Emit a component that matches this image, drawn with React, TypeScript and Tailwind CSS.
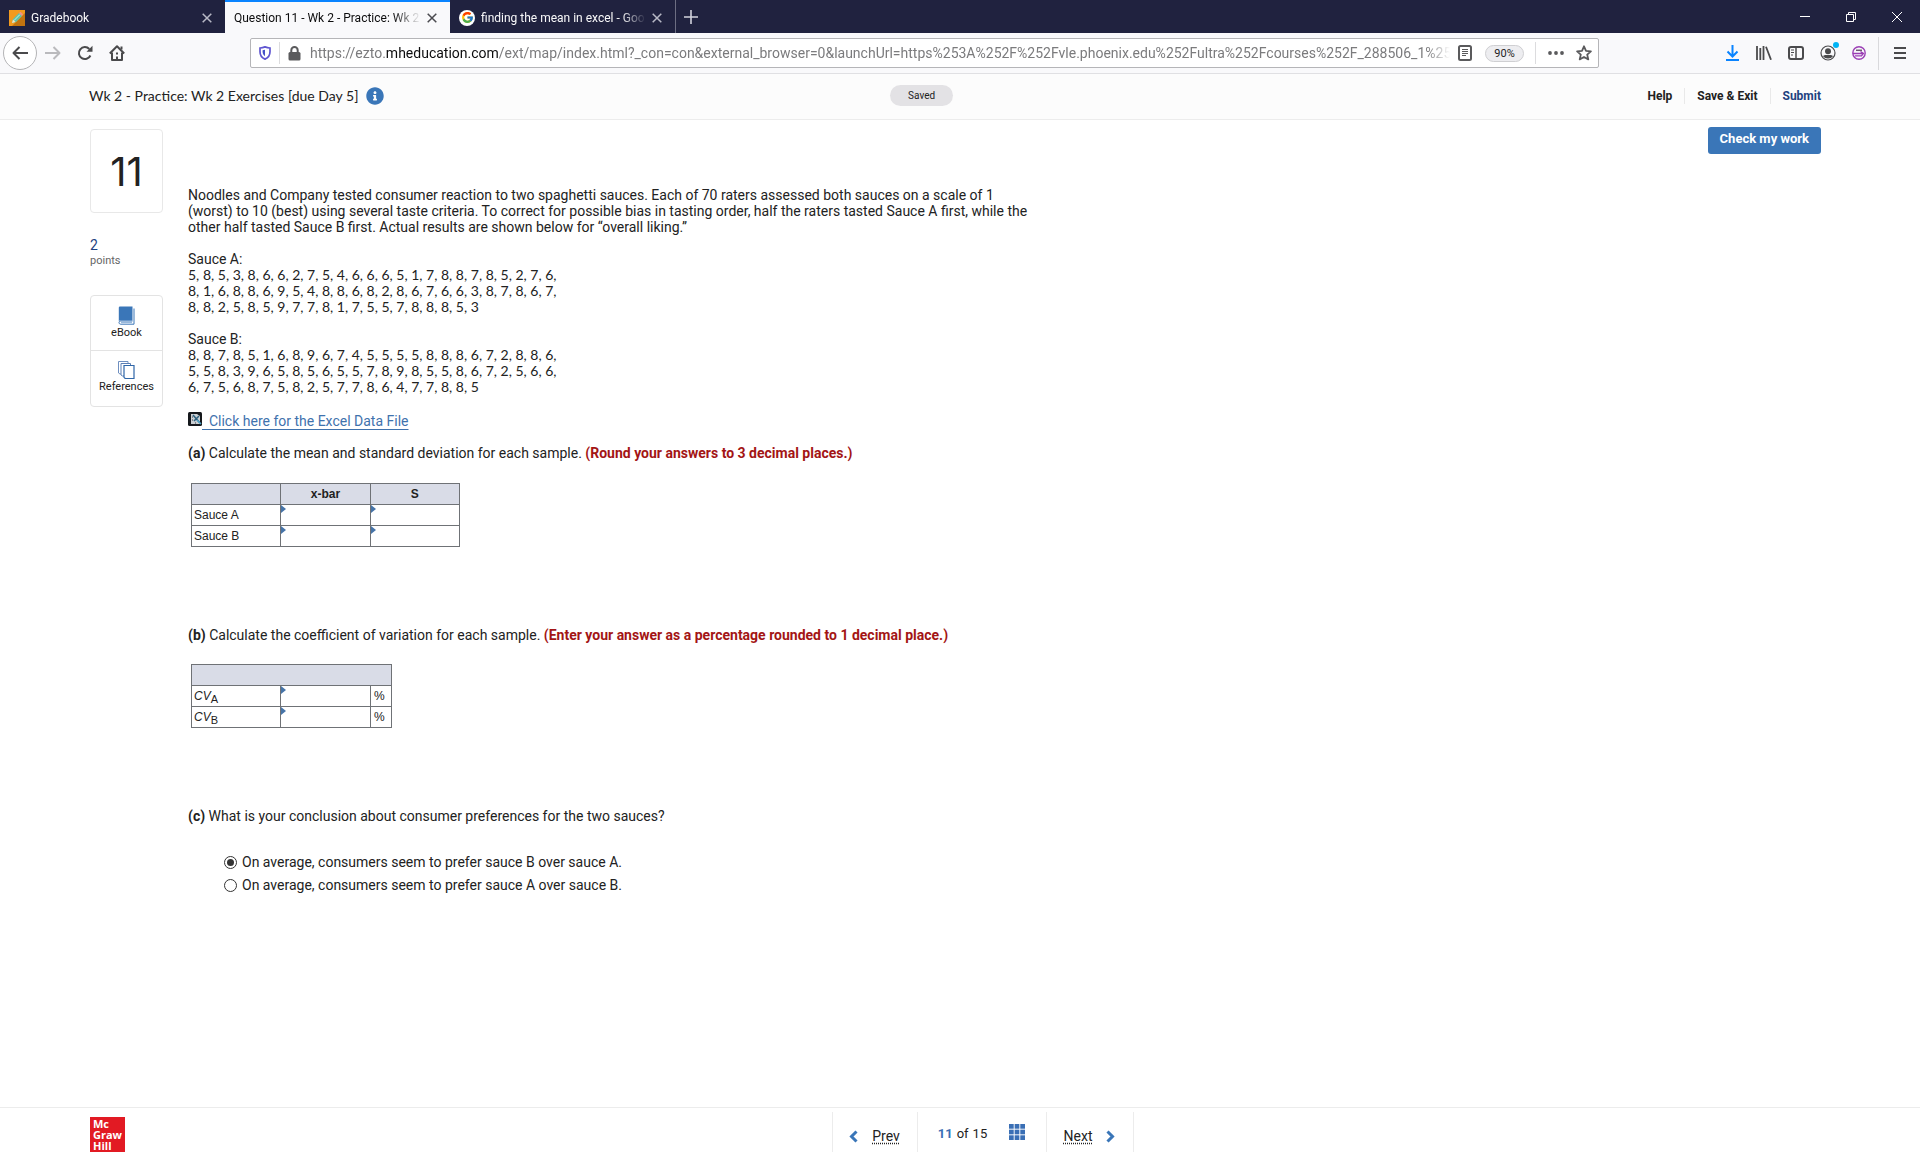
import { useState, type ReactNode } from "react";
import clsx from "clsx";
import { FaInfoCircle } from "react-icons/fa";
import { FcGoogle } from "react-icons/fc";

const URL_REST =
  "/ext/map/index.html?_con=con&external_browser=0&launchUrl=https%253A%252F%252Fvle.phoenix.edu%252Fultra%252Fcourses%252F_288506_1%252";

const sauces = [
  {
    name: "Sauce A:",
    rows: [
      "5, 8, 5, 3, 8, 6, 6, 2, 7, 5, 4, 6, 6, 6, 5, 1, 7, 8, 8, 7, 8, 5, 2, 7, 6,",
      "8, 1, 6, 8, 8, 6, 9, 5, 4, 8, 8, 6, 8, 2, 8, 6, 7, 6, 6, 3, 8, 7, 8, 6, 7,",
      "8, 8, 2, 5, 8, 5, 9, 7, 7, 8, 1, 7, 5, 5, 7, 8, 8, 8, 5, 3",
    ],
  },
  {
    name: "Sauce B:",
    rows: [
      "8, 8, 7, 8, 5, 1, 6, 8, 9, 6, 7, 4, 5, 5, 5, 5, 8, 8, 8, 6, 7, 2, 8, 8, 6,",
      "5, 5, 8, 3, 9, 6, 5, 8, 5, 6, 5, 5, 7, 8, 9, 8, 5, 5, 8, 6, 7, 2, 5, 6, 6,",
      "6, 7, 5, 6, 8, 7, 5, 8, 2, 5, 7, 7, 8, 6, 4, 7, 7, 8, 8, 5",
    ],
  },
];

const choices = [
  "On average, consumers seem to prefer sauce B over sauce A.",
  "On average, consumers seem to prefer sauce A over sauce B.",
];

const GradebookIcon = () => (
  <svg width="16" height="16" viewBox="0 0 16 16" className="shrink-0">
    <rect width="16" height="16" fill="#f29a1f" />
    <path d="M16 3v13H3z" fill="#c27410" />
    <path d="M3 13l1-4 6-6 3 3-6 6z" fill="#5ec2ab" />
    <path d="M5 10.500l6-6" stroke="#c9efe4" strokeWidth="1" />
    <path d="M10 3l1.500-1.200L14 4.300 13 6z" fill="#ef8f8f" />
    <path d="M3 13l1-3.500L6.500 12z" fill="#f8e3c0" />
  </svg>
);

const CloseIcon = ({ className }: { className?: string }) => (
  <svg width="10" height="10" viewBox="0 0 10 10" className={className}>
    <path d="M.7.7l8.600 8.600M9.300.7L.7 9.300" stroke="currentColor" strokeWidth="1.500" />
  </svg>
);

type TabProps = { title: string; icon?: ReactNode; active?: boolean };

const Tab = ({ title, icon, active }: TabProps) => (
  <div
    className={clsx(
      "flex h-[33px] w-[225px] items-center gap-[6px] border-t-2 pr-[13px] pl-[9px]",
      active
        ? "border-[#0a84ff] bg-[#f9f9fb] text-[#0c0c0d]"
        : "border-[#20223f] text-[#f9f9fa]"
    )}
  >
    {icon}
    <button className="min-w-0 flex-1 overflow-hidden text-left text-xs whitespace-nowrap mask-r-from-85% mask-r-to-100%">
      {title}
    </button>
    <button aria-label="Close tab" className={active ? "text-[#4a4a4f]" : "text-[#b8b9c6]"}>
      <CloseIcon />
    </button>
  </div>
);

const TabStrip = () => (
  <div className="flex h-[33px] items-center bg-[#20223f]">
    <Tab title="Gradebook" icon={<GradebookIcon />} />
    <Tab title="Question 11 - Wk 2 - Practice: Wk 2" active />
    <Tab
      title="finding the mean in excel - Goo"
      icon={
        <span className="flex size-4 shrink-0 items-center justify-center rounded-full bg-white">
          <FcGoogle size={13} />
        </span>
      }
    />
    <div className="h-full w-px bg-[#6d6e82]" />
    <button aria-label="New tab" className="ml-2 text-[#d2d3dd]">
      <svg width="14" height="14" viewBox="0 0 14 14">
        <path d="M7 0v14M0 7h14" stroke="currentColor" strokeWidth="1.600" />
      </svg>
    </button>
    <div className="mr-[18px] ml-auto flex items-center gap-9 text-white">
      <button aria-label="Minimize">
        <svg width="10" height="10" viewBox="0 0 10 10">
          <path d="M0 4.500h10" stroke="currentColor" />
        </svg>
      </button>
      <button aria-label="Restore">
        <svg width="10" height="10" viewBox="0 0 10 10" fill="none" stroke="currentColor">
          <path d="M.5 2.500h7v7h-7zM2.500 2.500v-2h7v7h-2" />
        </svg>
      </button>
      <button aria-label="Close window">
        <svg width="10" height="10" viewBox="0 0 10 10">
          <path d="M0 0l10 10M10 0L0 10" stroke="currentColor" />
        </svg>
      </button>
    </div>
  </div>
);

const AddressBar = () => (
  <div className="ml-[125px] flex h-[30px] min-w-0 flex-1 items-center rounded-[2px] border border-[#b5b5b8] bg-white pr-1.5 pl-2 text-[#5a5a5c]">
    <svg width="12" height="14" viewBox="0 0 12 14" className="shrink-0" fill="none">
      <path
        d="M6 .9c1.800.7 3.400 1 5 1.100v3.700c0 3.600-1.900 6.100-5 7.400-3.100-1.300-5-3.800-5-7.400V2C2.600 1.900 4.200 1.600 6 .9z"
        stroke="#5f55d0"
        strokeWidth="1.700"
      />
      <path d="M6 3.700v6.500c-1.600-1-2.400-2.500-2.400-4.600V4.200z" fill="#4551c8" />
    </svg>
    <span className="mx-2 h-[22px] w-px shrink-0 bg-[#dcdcde]" />
    <svg width="13" height="15" viewBox="0 0 13 15" className="shrink-0">
      <rect x=".5" y="6" width="12" height="8.500" rx="1.500" fill="currentColor" />
      <path d="M3.300 7V4.200a3.200 3.200 0 016.400 0V7" fill="none" stroke="currentColor" strokeWidth="2" />
    </svg>
    <div className="ml-[9px] min-w-0 flex-1 overflow-hidden text-sm whitespace-nowrap text-[#7b7b7d] mask-r-from-98% mask-r-to-100%">
      https://ezto.<span className="text-[#0c0c0d]">mheducation.com</span>
      {URL_REST}
    </div>
    <button aria-label="Reader view" className="ml-2 shrink-0">
      <svg width="14" height="16" viewBox="0 0 14 16" fill="none" stroke="currentColor">
        <rect x="1" y="1" width="12" height="14" rx="1.500" strokeWidth="2" />
        <path d="M4 4.500h6M4 6.500h6M4 8.500h6M4 10.500h4" />
      </svg>
    </button>
    <button className="ml-[13px] h-[17px] w-[39px] shrink-0 rounded-full border border-[#cfcfd2] bg-[#ededf0] text-[11px] leading-[15px] text-[#1c1c1d]">
      90%
    </button>
    <span className="mr-3 ml-[11px] h-[22px] w-px shrink-0 bg-[#dcdcde]" />
    <button aria-label="Page actions" className="shrink-0">
      <svg width="16" height="4" viewBox="0 0 16 4" fill="currentColor">
        <circle cx="2" cy="2" r="1.900" />
        <circle cx="8" cy="2" r="1.900" />
        <circle cx="14" cy="2" r="1.900" />
      </svg>
    </button>
    <button aria-label="Bookmark this page" className="ml-3 shrink-0">
      <svg width="16" height="16" viewBox="0 0 16 16" fill="none">
        <path
          d="M8 1.300l2 4.500 4.900.5-3.700 3.300 1.100 4.800L8 12l-4.300 2.400 1.100-4.800L1.100 6.300 6 5.800z"
          stroke="currentColor"
          strokeWidth="1.800"
          strokeLinejoin="round"
        />
      </svg>
    </button>
  </div>
);

const Toolbar = () => (
  <div className="flex h-[41px] items-center border-b border-[#e0e0e3] bg-[#f9f9fb] pr-[11px] pl-[3px] text-[#4a4a4c]">
    <button
      aria-label="Back"
      className="flex size-[34px] items-center justify-center rounded-full border border-[#b4b4b6] bg-white"
    >
      <svg width="16" height="14" viewBox="0 0 16 14" fill="none" stroke="currentColor" strokeWidth="2">
        <path d="M16 7H1.500M7.500 1l-6 6 6 6" strokeLinejoin="round" />
      </svg>
    </button>
    <button aria-label="Forward" className="ml-2 text-[#bababd]">
      <svg width="16" height="14" viewBox="0 0 16 14" fill="none" stroke="currentColor" strokeWidth="2">
        <path d="M0 7h14.500M8.500 1l6 6-6 6" strokeLinejoin="round" />
      </svg>
    </button>
    <button aria-label="Reload" className="ml-4">
      <svg width="16" height="16" viewBox="0 0 16 16" fill="none">
        <path d="M13.400 10.500A6 6 0 1112.300 4" stroke="currentColor" strokeWidth="2" />
        <path d="M15.500.8v6h-6z" fill="currentColor" />
      </svg>
    </button>
    <button aria-label="Home" className="ml-4">
      <svg width="16" height="16" viewBox="0 0 16 16" fill="none" stroke="currentColor" strokeWidth="2">
        <path d="M.8 8.500L8 1.300l7.200 7.200" strokeLinejoin="round" />
        <path d="M3 7.500V15h10V7.500" strokeLinejoin="round" />
        <path d="M8 15v-3.500M8 7.500v2" />
        <path d="M12.500 1.500v3" />
      </svg>
    </button>
    <AddressBar />
    <div className="ml-[127px] flex items-center gap-4">
      <button aria-label="Downloads" className="text-[#0a84ff]">
        <svg width="13" height="16" viewBox="0 0 13 16" fill="none" stroke="currentColor" strokeWidth="2">
          <path d="M6.500 0v11M1.500 6.500l5 5 5-5M0 15h13" />
        </svg>
      </button>
      <button aria-label="Library" className="ml-px">
        <svg width="16" height="14" viewBox="0 0 16 14" fill="none" stroke="currentColor" strokeWidth="1.800">
          <path d="M1 0v14M4.300 2v12M7.500 0v14M10 .7l5 13" />
        </svg>
      </button>
      <button aria-label="Sidebars">
        <svg width="16" height="14" viewBox="0 0 16 14" fill="none" stroke="currentColor">
          <rect x="1" y="1" width="14" height="12" rx="2" strokeWidth="2" />
          <path d="M8 1v12" strokeWidth="1.500" />
          <path d="M3 4h3M3 6.500h3M3 9h2" />
        </svg>
      </button>
      <button aria-label="Account" className="relative">
        <svg width="16" height="16" viewBox="0 0 16 16" fill="none">
          <circle cx="8" cy="8" r="7" stroke="currentColor" strokeWidth="1.200" />
          <circle cx="8" cy="6.300" r="3" fill="currentColor" />
          <path d="M3 11.200c1.400-1.600 2.900-1.200 5-1.200s3.600-.4 5 1.200A6 6 0 018 13.600a6 6 0 01-5-2.400z" fill="currentColor" />
        </svg>
        <span className="absolute -top-[3px] -right-[3px] size-1.5 rounded-full bg-[#00b3f4]" />
      </button>
      <button aria-label="Extension" className="text-[#9b3fb5]">
        <svg width="14" height="14" viewBox="0 0 14 14" fill="none" stroke="currentColor">
          <circle cx="7" cy="7" r="6.200" strokeWidth="1.400" />
          <path d="M1 7.500h10.500M3 9.800h7M8.500 5.500l3 2-2 2.300" strokeWidth="1.300" />
          <path d="M4 4.300h6" stroke="#6b5a70" strokeWidth="1.500" />
        </svg>
      </button>
    </div>
    <span className="mx-3 h-[33px] w-px bg-[#d9d9dc]" />
    <button aria-label="Menu" className="mx-[3px]">
      <svg width="12" height="12" viewBox="0 0 12 12" stroke="currentColor" strokeWidth="2">
        <path d="M0 1h12M0 6h12M0 11h12" />
      </svg>
    </button>
  </div>
);

const AssignmentHeader = () => (
  <header className="grid h-[46px] grid-cols-[12fr_auto_13fr] items-center border-b border-[#ececec] bg-[#fcfcfc] pr-[99px] pb-0.5 pl-[89px]">
    <div className="flex items-center gap-2">
      <h1 className="font-['Lato',sans-serif] text-sm">
        Wk 2 - Practice: Wk 2 Exercises [due Day 5]
      </h1>
      <button aria-label="Assignment information" className="text-[#3a76b8]">
        <FaInfoCircle size={18} />
      </button>
    </div>
    <span className="rounded-full bg-[#e3e2e5] px-[18px] text-[10px] leading-[21px]">Saved</span>
    <nav className="flex items-center justify-end text-xs font-bold">
      <a href="#help" className="pr-3">
        Help
      </a>
      <a href="#exit" className="border-x border-[#e9e9e9] px-3">
        Save &amp; Exit
      </a>
      <a href="#submit" className="pl-3 text-[#1f4280]">
        Submit
      </a>
    </nav>
  </header>
);

const BookIcon = () => (
  <svg width="17" height="19" viewBox="0 0 17 19" fill="none">
    <path d="M2 .5h12.500v14H2.500C1 14.500.8 15 .8 16V2C.8 1 1.200.5 2 .5z" fill="#3a76b8" />
    <path d="M14.500 15H2.800c-2.400 0-2.400 3.200 0 3.200h13.200V2.500" stroke="#3a76b8" />
    <path d="M3 16.600h11" stroke="#8db0d8" />
  </svg>
);

const ReferencesIcon = () => (
  <svg width="17" height="18" viewBox="0 0 17 18" fill="#fff" stroke="#5b7fb5">
    <path d="M.5.500h9.500v12.500h-8l-1.500-1z" stroke="#6f8fc0" />
    <path d="M3 2.500h9.500v12.500h-8L3 14z" />
    <path d="M6 4.500h10v13H7.200L6 16.300z" stroke="#2f66a8" strokeWidth="1.200" />
  </svg>
);

const QuestionAside = () => (
  <aside className="w-[73px] shrink-0 pt-0.5">
    <div className="flex h-[84px] items-center justify-center rounded-[4px] border border-[#e8e8e8] pt-0.5 font-['Inter',sans-serif] text-[40px]">
      11
    </div>
    <div className="mt-6 text-sm leading-4 text-[#1f4280]">2</div>
    <div className="text-[11px] leading-4 text-[#666]">points</div>
    <div className="mt-[26px] rounded-[4px] border border-[#e3e3e3] text-[11px] leading-4">
      <button className="flex h-[55px] w-full flex-col items-center border-b border-[#e3e3e3] pt-2.5">
        <BookIcon />
        eBook
      </button>
      <button className="flex h-[55px] w-full flex-col items-center pt-2.5">
        <ReferencesIcon />
        References
      </button>
    </div>
  </aside>
);

const AnswerCell = ({ label }: { label: string }) => (
  <td className="relative border border-[#6f7276] p-0">
    <span className="absolute top-0 left-0 border-y-4 border-l-[5px] border-y-transparent border-l-[#4674a8]" />
    <input aria-label={label} className="block h-5 w-full px-1.5 text-right outline-none" />
  </td>
);

const MeanTable = () => (
  <table className="mt-[22px] ml-[3px] w-[269px] table-fixed border-collapse font-['Liberation_Sans',Arial,sans-serif] text-xs leading-5">
    <thead>
      <tr className="bg-[#d9dce7]">
        <th className="border border-[#6f7276] p-0" />
        <th className="border border-[#6f7276] p-0">x-bar</th>
        <th className="border border-[#6f7276] p-0">S</th>
      </tr>
    </thead>
    <tbody>
      {["Sauce A", "Sauce B"].map((name) => (
        <tr key={name}>
          <td className="border border-[#6f7276] p-0 pl-0.5">{name}</td>
          <AnswerCell label={`${name} x-bar`} />
          <AnswerCell label={`${name} S`} />
        </tr>
      ))}
    </tbody>
  </table>
);

const VariationTable = () => (
  <table className="mt-[21px] ml-[3px] w-[201px] table-fixed border-collapse font-['Liberation_Sans',Arial,sans-serif] text-xs leading-5">
    <colgroup>
      <col className="w-[89px]" />
      <col className="w-[90px]" />
      <col />
    </colgroup>
    <thead>
      <tr className="bg-[#d9dce7]">
        <th colSpan={3} className="h-[21px] border border-[#6f7276] p-0" />
      </tr>
    </thead>
    <tbody>
      {["A", "B"].map((sauce) => (
        <tr key={sauce}>
          <td className="border border-[#6f7276] p-0 pl-0.5">
            <i>CV</i>
            <sub className="text-[11px]">{sauce}</sub>
          </td>
          <AnswerCell label={`CV ${sauce}`} />
          <td className="border border-[#6f7276] p-0 pl-[3px]">%</td>
        </tr>
      ))}
    </tbody>
  </table>
);

const ExcelIcon = () => (
  <svg width="14" height="14" viewBox="0 0 14 14" className="inline-block align-baseline">
    <rect width="14" height="14" rx="1.500" fill="#15181c" />
    <path d="M3 2h6l3 2v8H3z" fill="#c9ced2" />
    <path d="M5 3l7 8M11 4L6 9" stroke="#2b5f7d" strokeWidth="1.500" />
    <path d="M9 8l4 4" stroke="#4fa3c7" strokeWidth="1.500" />
    <path d="M4 5h1M4 8h1M7 11h1" stroke="#3a3f45" />
  </svg>
);

const QuestionBody = () => {
  const [answer, setAnswer] = useState(0);

  return (
    <article className="pt-[60px] text-sm leading-4">
      <p>
        Noodles and Company tested consumer reaction to two spaghetti sauces. Each of 70 raters
        assessed both sauces on a scale of 1
        <br />
        (worst) to 10 (best) using several taste criteria. To correct for possible bias in tasting
        order, half the raters tasted Sauce A first, while the
        <br />
        other half tasted Sauce B first. Actual results are shown below for “overall liking.”
      </p>
      {sauces.map((sauce) => (
        <div key={sauce.name} className="mt-4">
          <p>{sauce.name}</p>
          {sauce.rows.map((row) => (
            <p key={row} className="font-['Lato',sans-serif]">
              {row}
            </p>
          ))}
        </div>
      ))}
      <p className="mt-[17px]">
        <ExcelIcon />
        <a href="#excel" className="text-[#3f72ad] underline underline-offset-3">
          &nbsp; Click here for the Excel Data File
        </a>
      </p>

      <p className="mt-4">
        <b>(a)</b> Calculate the mean and standard deviation for each sample.{" "}
        <b className="text-[#a31515]">(Round your answers to 3 decimal places.)</b>
      </p>
      <MeanTable />

      <p className="mt-20">
        <b>(b)</b> Calculate the coefficient of variation for each sample.{" "}
        <b className="text-[#a31515]">
          (Enter your answer as a percentage rounded to 1 decimal place.)
        </b>
      </p>
      <VariationTable />

      <fieldset className="mt-20">
        <legend>
          <b>(c)</b> What is your conclusion about consumer preferences for the two sauces?
        </legend>
        <div className="mt-[27px] ml-9 flex flex-col">
          {choices.map((choice, i) => (
            <label key={choice} className="flex items-center gap-[5px] leading-[23px]">
              <input
                type="radio"
                name="conclusion"
                checked={answer === i}
                onChange={() => setAnswer(i)}
                className="size-[13px] appearance-none rounded-full border border-[#333] bg-white bg-clip-content p-[2px] checked:bg-[#333]"
              />
              {choice}
            </label>
          ))}
        </div>
      </fieldset>
    </article>
  );
};

const Chevron = ({ d }: { d: string }) => (
  <svg width="9" height="13" viewBox="0 0 9 13" fill="none" stroke="#3a76b8" strokeWidth="3">
    <path d={d} />
  </svg>
);

const GridIcon = () => (
  <svg width="16" height="16" viewBox="0 0 17 17" fill="#3a6fb5">
    {[0, 6, 12].map((y) =>
      [0, 6, 12].map((x) => <rect key={`${x}-${y}`} x={x} y={y} width="5" height="5" />)
    )}
  </svg>
);

const Footer = () => (
  <footer className="grid h-[53px] grid-cols-[1fr_auto_1fr] items-start border-t border-[#ececec] pr-[45px] pl-[90px]">
    <div className="mt-[9px] size-[35px] bg-[#e21a23] pt-px pl-[3px] font-['Open_Sans',sans-serif] text-[11px] leading-[11px] font-bold text-white">
      Mc
      <br />
      Graw
      <br />
      Hill
    </div>
    <nav className="mt-1 flex h-10 divide-x divide-[#ececec] border-x border-[#ececec] text-sm">
      <a href="#prev" className="flex w-[85px] items-center justify-center gap-[14px] pt-2">
        <Chevron d="M7.500 1.500l-5 5 5 5" />
        <span className="underline decoration-dotted underline-offset-2">Prev</span>
      </a>
      <div className="flex w-[129px] items-center justify-center gap-[22px]">
        <span className="flex gap-1 pt-1 text-[13px]">
          <b className="text-[#3a6fb5]">11</b> of <span>15</span>
        </span>
        <button aria-label="Question list">
          <GridIcon />
        </button>
      </div>
      <a href="#next" className="flex w-[86px] items-center justify-center gap-[14px] pt-2">
        <span className="underline decoration-dotted underline-offset-2">Next</span>
        <Chevron d="M1.500 1.500l5 5-5 5" />
      </a>
    </nav>
  </footer>
);

const App = () => {
  return (
    <div className="flex min-h-screen flex-col bg-white font-['Roboto',sans-serif] text-[#222]">
      <TabStrip />
      <Toolbar />
      <AssignmentHeader />
      <main className="flex flex-1 items-start gap-[25px] pt-[7px] pr-[99px] pl-[90px]">
        <QuestionAside />
        <QuestionBody />
        <button className="ml-auto shrink-0 rounded-[3px] bg-[#3a76b8] px-3 pb-[3px] text-[13px] leading-6 font-bold text-white">
          Check my work
        </button>
      </main>
      <Footer />
    </div>
  );
};

export default App;
